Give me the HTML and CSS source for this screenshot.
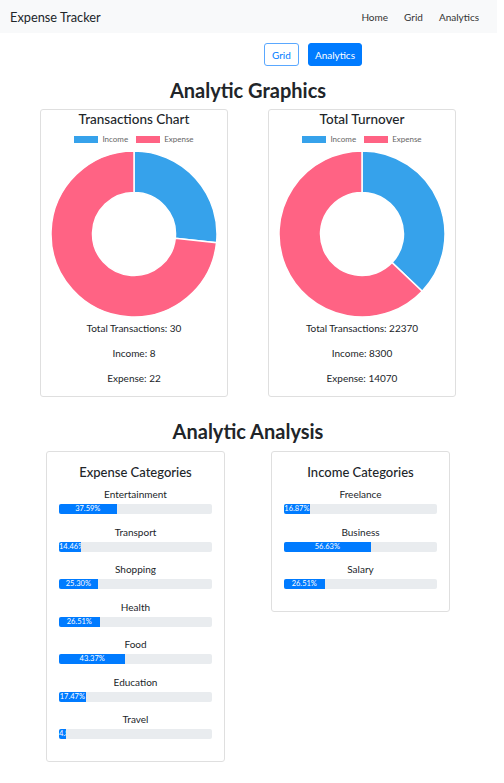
FILE: index.html
```html
<!DOCTYPE html>
<html>
<head>
<meta charset="utf-8">
<title>Expense Tracker</title>
<link rel="stylesheet" href="styles.css">
</head>
<body>
<nav class="navbar">
  <span class="brand">Expense Tracker</span>
  <ul class="nav-links">
    <li>Home</li>
    <li>Grid</li>
    <li>Analytics</li>
  </ul>
</nav>
<main class="page">
  <div class="toggle">
    <button class="btn btn-outline">Grid</button>
    <button class="btn btn-primary">Analytics</button>
  </div>

  <h2 class="section-title">Analytic Graphics</h2>
  <div class="chart-row">
    <section class="card chart-card">
      <h3 class="chart-title">Transactions Chart</h3>
      <div class="legend">
        <span class="swatch swatch-income"></span><span class="legend-label">Income</span>
        <span class="swatch swatch-expense"></span><span class="legend-label">Expense</span>
      </div>
      <svg class="donut" width="168" height="168" viewBox="0 0 168 168">
        <path class="seg-income" d="M84,1 A83,83 0 0 1 166.55,92.68 L125.27,88.34 A41.5,41.5 0 0 0 84,42.5 Z"/>
        <path class="seg-expense" d="M166.55,92.68 A83,83 0 1 1 84,1 L84,42.5 A41.5,41.5 0 1 0 125.27,88.34 Z"/>
      </svg>
      <div class="stats">
        <p>Total Transactions: 30</p>
        <p>Income: 8</p>
        <p>Expense: 22</p>
      </div>
    </section>
    <section class="card chart-card">
      <h3 class="chart-title">Total Turnover</h3>
      <div class="legend">
        <span class="swatch swatch-income"></span><span class="legend-label">Income</span>
        <span class="swatch swatch-expense"></span><span class="legend-label">Expense</span>
      </div>
      <svg class="donut" width="168" height="168" viewBox="0 0 168 168">
        <path class="seg-income" d="M84,1 A83,83 0 0 1 144.17,141.17 L114.08,112.59 A41.5,41.5 0 0 0 84,42.5 Z"/>
        <path class="seg-expense" d="M144.17,141.17 A83,83 0 1 1 84,1 L84,42.5 A41.5,41.5 0 1 0 114.08,112.59 Z"/>
      </svg>
      <div class="stats">
        <p>Total Transactions: 22370</p>
        <p>Income: 8300</p>
        <p>Expense: 14070</p>
      </div>
    </section>
  </div>

  <h2 class="section-title section-title-2">Analytic Analysis</h2>
  <div class="cat-row">
    <section class="card cat-card">
      <h3 class="cat-title">Expense Categories</h3>
      <div class="cat-list">
        <div class="cat-item"><div class="cat-label">Entertainment</div><div class="progress"><div class="bar" style="width:37.59%">37.59%</div></div></div>
        <div class="cat-item"><div class="cat-label">Transport</div><div class="progress"><div class="bar" style="width:14.46%">14.46%</div></div></div>
        <div class="cat-item"><div class="cat-label">Shopping</div><div class="progress"><div class="bar" style="width:25.30%">25.30%</div></div></div>
        <div class="cat-item"><div class="cat-label">Health</div><div class="progress"><div class="bar" style="width:26.51%">26.51%</div></div></div>
        <div class="cat-item"><div class="cat-label">Food</div><div class="progress"><div class="bar" style="width:43.37%">43.37%</div></div></div>
        <div class="cat-item"><div class="cat-label">Education</div><div class="progress"><div class="bar" style="width:17.47%">17.47%</div></div></div>
        <div class="cat-item"><div class="cat-label">Travel</div><div class="progress"><div class="bar" style="width:4.82%">4.82%</div></div></div>
      </div>
    </section>
    <section class="card cat-card">
      <h3 class="cat-title">Income Categories</h3>
      <div class="cat-list">
        <div class="cat-item"><div class="cat-label">Freelance</div><div class="progress"><div class="bar" style="width:16.87%">16.87%</div></div></div>
        <div class="cat-item"><div class="cat-label">Business</div><div class="progress"><div class="bar" style="width:56.63%">56.63%</div></div></div>
        <div class="cat-item"><div class="cat-label">Salary</div><div class="progress"><div class="bar" style="width:26.51%">26.51%</div></div></div>
      </div>
    </section>
  </div>
</main>
</body>
</html>
```
FILE: styles.css
```css
* { box-sizing: border-box; }
html, body { margin: 0; padding: 0; background: #fff; }
body {
  font-family: Lato, "Open Sans", sans-serif;
  color: #212529;
}
.navbar {
  height: 33px;
  background: #f8f9fa;
  display: flex;
  align-items: center;
  justify-content: space-between;
  padding: 0 18px 0 10px;
  width: 497px;
}
.brand { font-size: 12.8px; color: #212529; }
.nav-links {
  list-style: none;
  margin: 0;
  padding: 0;
  display: flex;
  gap: 16px;
  font-size: 10px;
  color: #333;
}
.page { width: 496px; }
.toggle {
  display: flex;
  gap: 9px;
  padding-left: 264px;
  margin-top: 10px;
}
.btn {
  height: 23px;
  font-family: inherit;
  font-size: 10px;
  border-radius: 3px;
  padding: 0 8px;
  border: 1px solid #007bff;
  cursor: pointer;
}
.btn-outline { background: #fff; color: #007bff; border-color: #5aa8ff; padding: 0 7px; }
.btn-primary { background: #007bff; color: #fff; padding: 0 6px; }
.section-title {
  text-align: center;
  font-size: 20px;
  font-weight: 700;
  line-height: 24px;
  margin: 12px 0 7px;
}
.section-title-2 { margin: 22px 0 8px; }
.card {
  border: 1px solid #dfdfdf;
  border-radius: 3px;
  background: #fff;
}
.chart-row {
  display: flex;
  justify-content: center;
  gap: 40px;
}
.chart-card {
  width: 188px;
  height: 288px;
  display: flex;
  flex-direction: column;
  align-items: center;
}
.chart-title {
  margin: 0;
  font-size: 13.5px;
  font-weight: 500;
  line-height: 18px;
}
.legend {
  display: flex;
  align-items: center;
  height: 10px;
  margin-top: 6px;
  font-size: 8px;
  color: #666;
}
.swatch { width: 24px; height: 7px; display: inline-block; margin-right: 4px; }
.swatch-income { background: #36a2eb; }
.swatch-expense { background: #ff6384; margin-left: 8px; }
.donut { margin-top: 6px; display: block; }
.seg-income { fill: #36a2eb; stroke: #fff; stroke-width: 1.5; }
.seg-expense { fill: #ff6384; stroke: #fff; stroke-width: 1.5; }
.stats {
  margin-top: 3px;
  display: flex;
  flex-direction: column;
  align-items: center;
  gap: 11px;
  font-size: 10px;
  color: #212529;
}
.stats p { margin: 0; line-height: 14px; }
.cat-row {
  display: flex;
  justify-content: center;
  align-items: flex-start;
  gap: 46px;
}
.cat-card {
  width: 179px;
  padding: 11px 12px 22px;
}
.cat-title {
  margin: 0;
  text-align: center;
  font-size: 13px;
  font-weight: 500;
  line-height: 18px;
}
.cat-list {
  margin-top: 6px;
  display: flex;
  flex-direction: column;
  gap: 10.5px;
}
.cat-label {
  text-align: center;
  font-size: 10px;
  line-height: 14px;
}
.progress {
  margin-top: 3px;
  height: 10px;
  background: #e9ecef;
  border-radius: 2px;
  overflow: hidden;
}
.bar {
  height: 100%;
  background: #007bff;
  color: #fff;
  font-size: 7.5px;
  line-height: 10px;
  text-align: center;
  white-space: nowrap;
  overflow: hidden;
}
```
